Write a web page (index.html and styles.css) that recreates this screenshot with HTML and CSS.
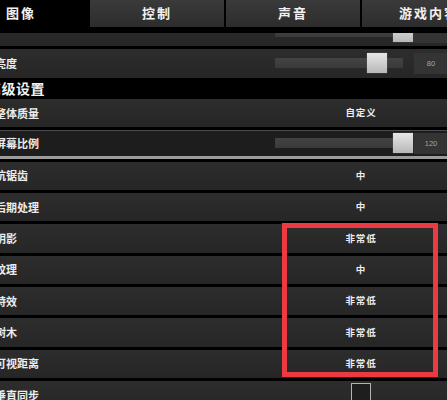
FILE: index.html
```html
<!DOCTYPE html>
<html lang="zh">
<head>
<meta charset="utf-8">
<title>设置</title>
<link rel="stylesheet" href="styles.css">
</head>
<body>
<div class="screen">
  <nav class="tabs">
    <div class="tab active">图像</div>
    <div class="tab">控制</div>
    <div class="tab">声音</div>
    <div class="tab">游戏内容</div>
  </nav>
  <div class="content">
    <div class="list">
      <div class="row">
        <div class="label"></div>
        <div class="control">
          <div class="slider">
            <div class="track"><div class="thumb" style="left:118px"></div></div>
            <div class="num"></div>
          </div>
        </div>
      </div>
      <div class="row">
        <div class="label">亮度</div>
        <div class="control">
          <div class="slider">
            <div class="track"><div class="thumb" style="left:92px"></div></div>
            <div class="num">80</div>
          </div>
        </div>
      </div>
      <div class="heading">高级设置</div>
      <div class="row">
        <div class="label">整体质量</div>
        <div class="control value">自定义</div>
      </div>
      <div class="row selected">
        <div class="label">屏幕比例</div>
        <div class="control">
          <div class="slider">
            <div class="track"><div class="thumb" style="left:118px"></div></div>
            <div class="num">120</div>
          </div>
        </div>
      </div>
      <div class="row">
        <div class="label">抗锯齿</div>
        <div class="control value">中</div>
      </div>
      <div class="row">
        <div class="label">后期处理</div>
        <div class="control value">中</div>
      </div>
      <div class="row">
        <div class="label">阴影</div>
        <div class="control value">非常低</div>
      </div>
      <div class="row">
        <div class="label">纹理</div>
        <div class="control value">中</div>
      </div>
      <div class="row">
        <div class="label">特效</div>
        <div class="control value">非常低</div>
      </div>
      <div class="row">
        <div class="label">树木</div>
        <div class="control value">非常低</div>
      </div>
      <div class="row">
        <div class="label">可视距离</div>
        <div class="control value">非常低</div>
      </div>
      <div class="row">
        <div class="label">垂直同步</div>
        <div class="control value top"><span class="checkbox"></span></div>
      </div>
    </div>
  </div>
  <div class="highlight"></div>
</div>
</body>
</html>
```

FILE: styles.css
```css
html, body {
  margin: 0;
  padding: 0;
  background: #000;
}
body {
  width: 447px;
  height: 400px;
  overflow: hidden;
  font-family: "Noto Sans CJK SC", "Noto Sans", sans-serif;
  font-weight: 700;
  color: #ececec;
}
.screen {
  position: relative;
  width: 447px;
  height: 400px;
  overflow: hidden;
}
.tabs {
  display: flex;
  gap: 2px;
  margin-left: -46px;
  height: 27px;
  border-bottom: 1px solid #000;
  background: #000;
  position: relative;
  z-index: 2;
  box-shadow: 0 5px 0 #000;
}
.tab {
  flex: 0 0 134px;
  display: flex;
  align-items: center;
  justify-content: center;
  font-size: 13px;
  letter-spacing: 2px;
  color: #f2f2f2;
  background: linear-gradient(#3a3a3a, #2c2c2c);
  line-height: 1;
  padding-bottom: 3px;
  box-sizing: border-box;
}
.tab.active {
  background: #000;
}
.content {
  height: 372px;
  overflow: hidden;
}
.list {
  display: flex;
  flex-direction: column;
  gap: 3px;
  margin-top: -10px;
}
.row {
  height: 28.33px;
  display: flex;
  align-items: center;
  background: linear-gradient(#2d2d2d, #262626);
  flex-shrink: 0;
  box-sizing: border-box;
}
.row.selected {
  background: #1d1d1d;
  border-top: 1px solid #4c4c4c;
  border-bottom: 3px solid #9c9c9c;
  box-shadow: 0 1px 0 #000;
}
.label {
  flex: 0 0 280px;
  margin-left: -5px;
  font-size: 11px;
  line-height: 1;
  white-space: nowrap;
}
.control {
  flex: 0 0 172px;
  display: flex;
  align-items: center;
}
.value {
  justify-content: center;
  font-size: 9.5px;
  letter-spacing: 0.8px;
  line-height: 1;
}
.value.top {
  align-self: flex-start;
}
.slider {
  display: flex;
  align-items: center;
  gap: 11px;
}
.track {
  position: relative;
  width: 128px;
  height: 10px;
  background: linear-gradient(#434343, #3a3a3a);
}
.thumb {
  position: absolute;
  top: -5px;
  width: 20px;
  height: 20px;
  background: linear-gradient(#e6e6e6, #b8b8b8);
  box-shadow: 0 0 1px #777;
}
.num {
  width: 34px;
  height: 21px;
  background: #343434;
  display: flex;
  align-items: center;
  justify-content: center;
  font-size: 7.5px;
  font-weight: 400;
  color: #a6a6a6;
  font-family: "Liberation Sans", sans-serif;
}
.heading {
  height: 15.33px;
  flex-shrink: 0;
  display: flex;
  align-items: center;
  margin-left: -13px;
  font-size: 14px;
  letter-spacing: 0.5px;
  line-height: 1;
  color: #f2f2f2;
  background: #000;
}
.checkbox {
  display: block;
  width: 20px;
  height: 20px;
  box-sizing: border-box;
  border: 1.5px solid #b4b4b4;
  background: #1e1e1e;
  margin-top: 2px;
}
.highlight {
  position: absolute;
  left: 282px;
  top: 223px;
  width: 146px;
  height: 144px;
  border: 5px solid #ec3a42;
  z-index: 3;
}
```
